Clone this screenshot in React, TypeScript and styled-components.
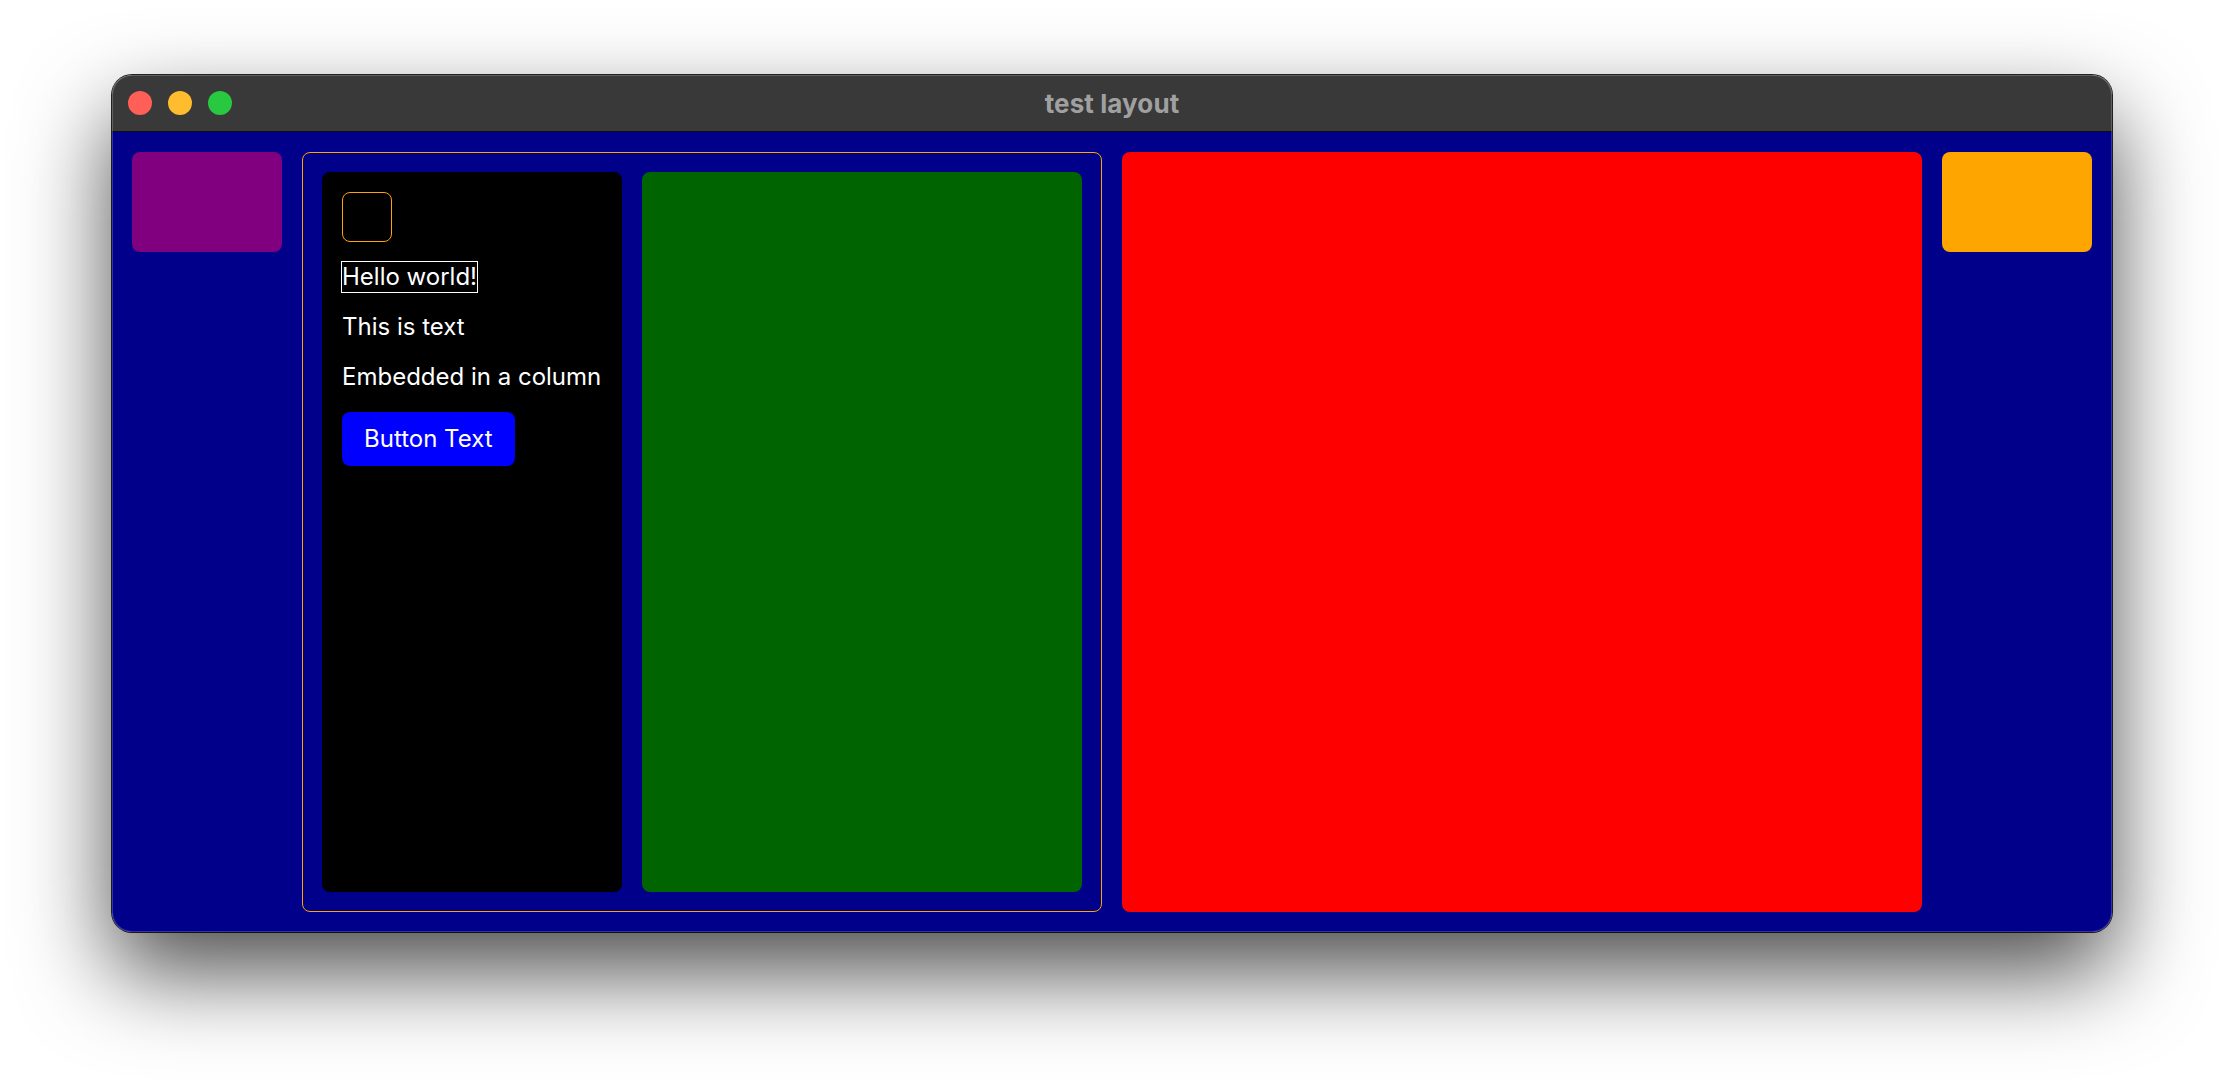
import React from "react";
import styled, { createGlobalStyle } from "styled-components";

const GlobalStyle = createGlobalStyle`
  html, body {
    margin: 0;
    padding: 0;
    background: #ffffff;
    font-family: Inter, "Noto Sans", "Liberation Sans", sans-serif;
  }
  * { box-sizing: border-box; }
`;

const Page = styled.div`
  width: 2224px;
  height: 1080px;
  padding: 75px 112px 0 112px;
  overflow: hidden;
  background: #ffffff;
`;

const Window = styled.div`
  position: relative;
  width: 2000px;
  border-radius: 20px;
  overflow: hidden;
  box-shadow:
    0 0 0 1px rgba(0, 0, 0, 0.85),
    0 40px 90px rgba(0, 0, 0, 0.7);

  &::after {
    content: "";
    position: absolute;
    inset: 0;
    border-radius: 20px;
    box-shadow: inset 0 0 0 1px rgba(255, 255, 255, 0.2);
    pointer-events: none;
  }
`;

const TitleBar = styled.div`
  height: 57px;
  background: #383938;
  border-bottom: 1px solid #0e0e0e;
  display: grid;
  grid-template-columns: 1fr auto 1fr;
  align-items: center;
  padding: 0 16px;
`;

const Lights = styled.div`
  display: flex;
  gap: 16px;
  align-items: center;
`;

const Light = styled.span<{ $color: string }>`
  width: 24px;
  height: 24px;
  border-radius: 50%;
  background: ${(p) => p.$color};
`;

const Title = styled.div`
  font-family: Inter, "Noto Sans", sans-serif;
  font-weight: 700;
  font-size: 26px;
  color: #a0a0a0;
  letter-spacing: 0.1px;
`;

const Content = styled.div`
  height: 800px;
  background: #00008b;
  padding: 20px;
  display: flex;
  gap: 20px;
  align-items: flex-start;
`;

const SideTile = styled.div<{ $color: string }>`
  width: 150px;
  height: 100px;
  flex: none;
  border-radius: 8px;
  background: ${(p) => p.$color};
`;

const Frame = styled.div`
  width: 800px;
  height: 760px;
  flex: none;
  border: 1px solid #ffa500;
  border-radius: 8px;
  padding: 19px;
  display: flex;
  gap: 20px;
`;

const Column = styled.div`
  width: 300px;
  flex: none;
  background: #000000;
  border-radius: 8px;
  padding: 20px;
  display: flex;
  flex-direction: column;
  align-items: flex-start;
  gap: 20px;
`;

const IconBox = styled.div`
  width: 50px;
  height: 50px;
  border: 1px solid #ffa500;
  border-radius: 8px;
`;

const Label = styled.span<{ $outlined?: boolean }>`
  color: #ffffff;
  font-size: 24px;
  line-height: 30px;
  white-space: nowrap;
  outline: ${(p) => (p.$outlined ? "1px solid #ffffff" : "none")};
`;

const ActionButton = styled.button`
  background: #0000ff;
  color: #ffffff;
  border: none;
  border-radius: 8px;
  padding: 12px 22px;
  font-family: Inter, "Noto Sans", sans-serif;
  font-size: 24px;
  line-height: 30px;
  cursor: pointer;
`;

const Panel = styled.div`
  width: 440px;
  flex: none;
  background: #006400;
  border-radius: 8px;
`;

const Stage = styled.div`
  width: 800px;
  height: 760px;
  flex: none;
  background: #ff0000;
  border-radius: 8px;
`;

export default function App() {
  return (
    <>
      <GlobalStyle />
      <Page>
        <Window>
          <TitleBar>
            <Lights>
              <Light $color="#ff5f57" />
              <Light $color="#febc2e" />
              <Light $color="#28c840" />
            </Lights>
            <Title>test layout</Title>
            <div />
          </TitleBar>
          <Content>
            <SideTile $color="#800080" />
            <Frame>
              <Column>
                <IconBox />
                <Label $outlined>Hello world!</Label>
                <Label>This is text</Label>
                <Label>Embedded in a column</Label>
                <ActionButton>Button Text</ActionButton>
              </Column>
              <Panel />
            </Frame>
            <Stage />
            <SideTile $color="#ffa500" />
          </Content>
        </Window>
      </Page>
    </>
  );
}
